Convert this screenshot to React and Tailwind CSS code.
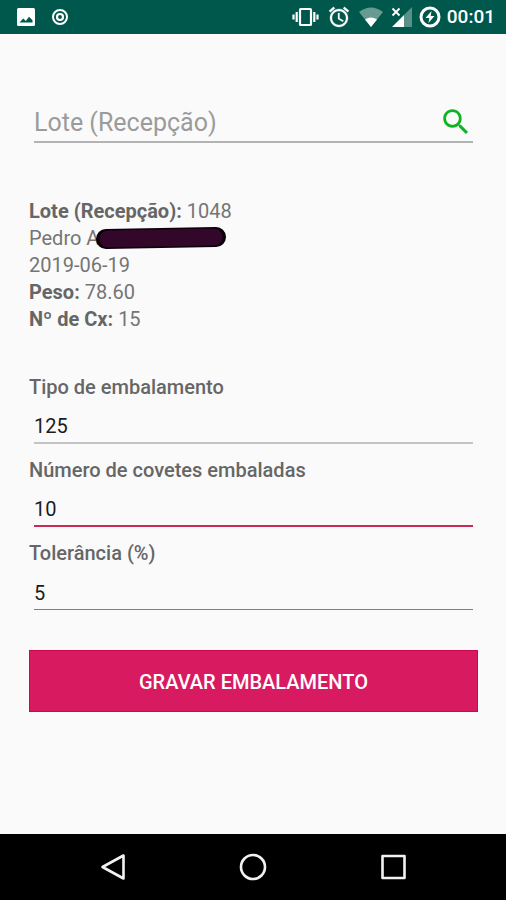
import React, { useState } from 'react';

const StatusBar = () => (
    <header className="flex h-[34px] items-center justify-between bg-[#00574b] pl-4 pr-[11px] text-white">
        <div className="flex items-center gap-4">
            <svg className="h-5 w-5" viewBox="0 0 20 20" aria-hidden="true">
                <path fill="#fff" fillRule="evenodd" d="M2.500 1h15A1.500 1.500 0 0 1 19 2.500v15a1.500 1.500 0 0 1-1.500 1.500h-15A1.500 1.500 0 0 1 1 17.500v-15A1.500 1.500 0 0 1 2.500 1zM3.500 15.500h13v-2.300L13 9.700l-3.200 4.300-2.600-2.600z" />
            </svg>
            <svg className="h-4 w-4" viewBox="0 0 16 16" fill="none" stroke="#fff" aria-hidden="true">
                <circle cx="8" cy="8" r="7" strokeWidth="2" />
                <circle cx="8" cy="8" r="3" strokeWidth="2.200" />
            </svg>
        </div>
        <div className="flex items-center">
            <svg className="mr-2 h-5 w-[27px]" viewBox="0 0 27 20" fill="none" stroke="#fff" strokeWidth="2.200" aria-hidden="true">
                <rect x="8" y="2" width="11" height="16" rx="0.800" />
                <path d="M4.700 5v10M22.300 5v10M1.500 7.500v5M25.500 7.500v5" />
            </svg>
            <svg className="mr-2 h-6 w-6" viewBox="0 0 24 24" fill="#fff" stroke="#fff" strokeWidth="0.300" aria-hidden="true">
                <path d="M22 5.720l-4.600-3.860-1.290 1.530 4.600 3.860L22 5.720zM7.880 3.390L6.600 1.860 2 5.710l1.290 1.530 4.590-3.850zM12.500 8H11v6l4.750 2.850.75-1.230-4-2.370V8zM12 4c-4.970 0-9 4.030-9 9s4.020 9 9 9c4.970 0 9-4.030 9-9s-4.030-9-9-9zm0 16c-3.870 0-7-3.130-7-7s3.130-7 7-7 7 3.130 7 7-3.130 7-7 7z" />
            </svg>
            <svg className="mr-2 h-5 w-6" viewBox="0 0 24 20" fill="#fff" aria-hidden="true">
                <path opacity="0.400" d="M0 5Q12-4 24 5L12 20z" />
                <path d="M6 12.500Q12 8.500 18 12.500L12 20z" />
            </svg>
            <svg className="mr-[7px] h-5 w-[21px]" viewBox="0 0 21 20" fill="#fff" aria-hidden="true">
                <path opacity="0.350" d="M21 0v20h-8V8z" />
                <path d="M13 8v12H1z" />
                <path fill="none" stroke="#fff" strokeWidth="1.800" d="M1.500 1.500l7 7M8.500 1.500l-7 7" />
            </svg>
            <svg className="mr-[6px] h-[22px] w-[22px]" viewBox="0 0 22 22" aria-hidden="true">
                <circle cx="11" cy="11" r="9" fill="none" stroke="#fff" strokeWidth="3" />
                <path fill="#fff" d="M12.500 5L6.500 12h3.800L9.500 17l6-7h-3.800z" />
            </svg>
            <span className="text-[19px] font-medium leading-6">00:01</span>
        </div>
    </header>
);

const Field = ({ id, label, value, onChange, line }) => (
    <div>
        <label htmlFor={id} className="block font-medium leading-[29px] text-[#666]">{label}</label>
        <div className="px-[5px]">
            <input
                id={id}
                type="text"
                inputMode="numeric"
                value={value}
                onChange={(e) => onChange(e.target.value)}
                className={`block h-[42px] w-full bg-transparent pt-2 text-[#1c1c1c] outline-none ${line}`}
            />
        </div>
    </div>
);

const NavBar = () => (
    <nav className="flex h-[66px] items-center justify-around bg-black px-[43px]">
        <button type="button" aria-label="Voltar">
            <svg className="h-7 w-7" viewBox="0 0 28 28" fill="none" stroke="#f2f2f2" strokeWidth="2.600" strokeLinejoin="round">
                <path d="M24.500 2.500v23L3.500 14z" />
            </svg>
        </button>
        <button type="button" aria-label="Início">
            <svg className="h-7 w-7" viewBox="0 0 28 28" fill="none" stroke="#f2f2f2" strokeWidth="2.600">
                <circle cx="14" cy="14" r="12" />
            </svg>
        </button>
        <button type="button" aria-label="Recentes">
            <svg className="h-7 w-7" viewBox="0 0 28 28" fill="none" stroke="#f2f2f2" strokeWidth="2.600" strokeLinejoin="round">
                <rect x="3.500" y="3" width="22" height="22" />
            </svg>
        </button>
    </nav>
);

const App = () => {
    const [search, setSearch] = useState('');
    const [tipo, setTipo] = useState('125');
    const [covetes, setCovetes] = useState('10');
    const [tolerancia, setTolerancia] = useState('5');

    return (
        <div className="flex min-h-screen flex-col bg-[#fafafa] font-['Roboto',sans-serif] text-xl">
            <StatusBar />

            <main className="flex-grow pl-[29px] pr-7 pt-[68px]">
                {/* Search */}
                <form className="mx-[5px] flex h-[41px] items-center border-b-2 border-[#b3b3b3]" onSubmit={(e) => e.preventDefault()}>
                    <input
                        type="text"
                        aria-label="Lote (Recepção)"
                        placeholder="Lote (Recepção)"
                        value={search}
                        onChange={(e) => setSearch(e.target.value)}
                        className="h-full min-w-0 flex-grow bg-transparent pt-[2px] text-[25px] text-[#1c1c1c] outline-none placeholder:text-[#9b9b9b]"
                    />
                    <button type="submit" aria-label="Pesquisar">
                        <svg className="h-[34px] w-[34px]" viewBox="0 0 24 24" fill="#0db323">
                            <path d="M15.500 14h-.79l-.28-.27C15.410 12.590 16 11.110 16 9.500 16 5.910 13.090 3 9.500 3S3 5.910 3 9.500 5.910 16 9.500 16c1.610 0 3.090-.59 4.230-1.570l.27.28v.79l5 4.990L20.490 19l-4.990-5zm-6 0C7.010 14 5 11.990 5 9.500S7.010 5 9.500 5 14 7.010 14 9.500 11.990 14 9.500 14z" />
                        </svg>
                    </button>
                </form>

                {/* Lot details */}
                <section className="mt-[55px] leading-[27px] text-[#757575]">
                    <p><b className="text-[#666]">Lote (Recepção):</b> 1048</p>
                    <p className="flex items-center">
                        Pedro A
                        <svg className="-ml-1 h-6 w-[132px]" viewBox="0 0 132 24" aria-hidden="true">
                            <path fill="none" stroke="#0c0109" strokeWidth="20" strokeLinecap="round" strokeLinejoin="round" d="M11 12L66 11L121 10" />
                            <path fill="none" stroke="#32072a" strokeWidth="17" strokeLinecap="round" d="M13 12L66 11L119 10" />
                        </svg>
                    </p>
                    <p>2019-06-19</p>
                    <p><b className="text-[#666]">Peso:</b> 78.60</p>
                    <p><b className="text-[#666]">Nº de Cx:</b> 15</p>
                </section>

                {/* Packaging form */}
                <form className="mt-10" onSubmit={(e) => e.preventDefault()}>
                    <div className="flex flex-col gap-3">
                        <Field id="tipo" label="Tipo de embalamento" value={tipo} onChange={setTipo} line="border-b-2 border-[#c4c4c4]" />
                        <Field id="covetes" label="Número de covetes embaladas" value={covetes} onChange={setCovetes} line="border-b-2 border-[#cb2a56]" />
                        <Field id="tolerancia" label="Tolerância (%)" value={tolerancia} onChange={setTolerancia} line="border-b border-[#808080]" />
                    </div>
                    <button type="submit" className="mt-10 h-[62px] w-full border border-[#d0064c] bg-[#d81b60] pt-[2px] font-medium text-white">
                        GRAVAR EMBALAMENTO
                    </button>
                </form>
            </main>

            <NavBar />
        </div>
    );
};

export default App;
